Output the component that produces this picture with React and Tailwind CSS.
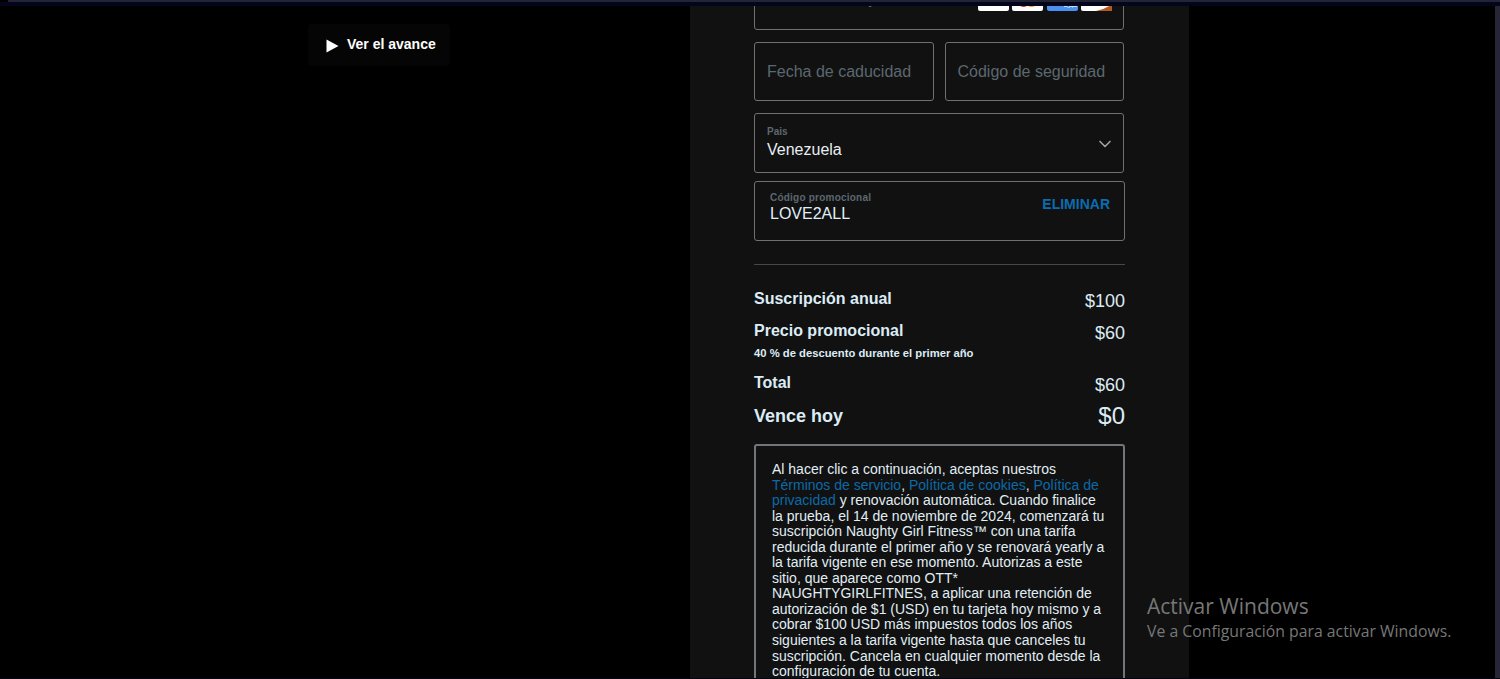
import React from 'react';
import { ChevronDown } from 'lucide-react';

const prices = [
  { label: 'Suscripción anual', value: '$100' },
  { label: 'Precio promocional', value: '$60', note: '40 % de descuento durante el primer año' },
  { label: 'Total', value: '$60' },
];

const fieldStyle = 'rounded-[3px] border border-[#707070]';

const CardLogos = () => (
  <svg width="134" height="20" viewBox="0 0 134 20" className="mt-px shrink-0">
    <rect width="31" height="20" rx="2" fill="#fff" />
    <rect x="34" width="31" height="20" rx="2" fill="#fff" />
    <circle cx="45.500" cy="10" r="6" fill="#eb2f2a" />
    <circle cx="53.500" cy="10" r="6" fill="#f79a2a" />
    <rect x="69" width="31" height="20" rx="2" fill="#4a90ee" />
    <path d="M86 15.500h3l1.500 1L92 15.500h7M91 13l4 3.500M95 13l-4 3.500" stroke="#c5ddfb" fill="none" />
    <rect x="103" width="31" height="20" rx="2" fill="#fff" />
    <path d="M134 13v7h-16q10-2 16-7z" fill="#b55a1c" />
  </svg>
);

const Link = ({ children }) => <a className="text-[#0b6aa8]">{children}</a>;

const PaymentForm = () => (
  <>
    <div className="flex h-6 w-[370px] flex-col justify-end overflow-hidden">
      <div className={`flex h-[59px] shrink-0 items-center justify-between pl-3 pr-[11px] ${fieldStyle}`}>
        <span className="pb-1 text-base leading-none text-[#5c6870]">Número de tarjeta</span>
        <CardLogos />
      </div>
    </div>

    <div className="mt-3 grid w-[370px] grid-cols-2 gap-[11px] text-base text-[#5c6870]">
      <div className={`flex h-[59px] items-center pl-3 ${fieldStyle}`}>Fecha de caducidad</div>
      <div className={`flex h-[59px] items-center pl-3 ${fieldStyle}`}>Código de seguridad</div>
    </div>

    <div className={`mt-3 flex h-[60px] w-[370px] items-center justify-between pt-0.5 pl-3 pr-2 ${fieldStyle}`}>
      <div>
        <div className="text-[10px] leading-3 font-bold text-[#5c6870]">Pais</div>
        <div className="text-base leading-6 text-[#e8eef2]">Venezuela</div>
      </div>
      <ChevronDown size={20} strokeWidth={2} className="text-[#a0a0a0]" />
    </div>

    <div className={`mt-2 flex h-[60px] justify-between pt-2.5 pl-[15px] pr-3.5 ${fieldStyle}`}>
      <div>
        <div className="text-[10px] leading-3 font-bold tracking-[0.22px] text-[#5c6870]">Código promocional</div>
        <div className="text-base leading-5 text-[#e0f0f8]">LOVE2ALL</div>
      </div>
      <button className="h-6 text-sm leading-6 font-bold text-[#0b6cb0]">ELIMINAR</button>
    </div>
  </>
);

const Summary = () => (
  <div className="mt-[23px] border-t border-[#484848] pt-6 text-[#dcecf5]">
    {prices.map((item) => (
      <div key={item.label} className={item.note ? 'h-[52px]' : 'h-8'}>
        <div className="flex justify-between">
          <span className="text-base leading-[19px] font-bold">{item.label}</span>
          <span className="text-lg leading-6">{item.value}</span>
        </div>
        {item.note && <div className="text-[11.25px] leading-4 font-bold">{item.note}</div>}
      </div>
    ))}
    <div className="-mt-px flex h-10 justify-between font-bold">
      <span className="text-lg leading-6">Vence hoy</span>
      <span className="text-2xl leading-6 font-normal">$0</span>
    </div>
  </div>
);

const Terms = () => (
  <div className="h-[260px] rounded-[3px] border-2 border-[#70777a] pt-4 pl-4 text-sm leading-[15.550px] whitespace-nowrap text-[#e0eef5]">
    Al hacer clic a continuación, aceptas nuestros<br />
    <Link>Términos de servicio</Link>, <Link>Política de cookies</Link>, <Link>Política de</Link><br />
    <Link>privacidad</Link> y renovación automática. Cuando finalice<br />
    la prueba, el 14 de noviembre de 2024, comenzará tu<br />
    suscripción Naughty Girl Fitness™ con una tarifa<br />
    reducida durante el primer año y se renovará yearly a<br />
    la tarifa vigente en ese momento. Autorizas a este<br />
    sitio, que aparece como OTT*<br />
    NAUGHTYGIRLFITNES, a aplicar una retención de<br />
    autorización de $1 (USD) en tu tarjeta hoy mismo y a<br />
    cobrar $100 USD más impuestos todos los años<br />
    siguientes a la tarifa vigente hasta que canceles tu<br />
    suscripción. Cancela en cualquier momento desde la<br />
    configuración de tu cuenta.
  </div>
);

const App = () => {
  return (
    <div className="relative flex h-[679px] w-[1500px] flex-col overflow-hidden bg-black font-['Liberation_Sans',Arial,sans-serif]">
      <div className="ml-2 h-0.5 shrink-0 bg-[#232536]" />
      <div className="h-1 shrink-0 bg-[#03051a]" />
      <div className="flex min-h-0 flex-1">
        <section className="w-[690px] shrink-0 pt-[18px] pl-[308px]">
          <button className="flex h-[42px] w-[142px] items-center rounded bg-[#050505] pl-[18px] text-sm font-bold text-white">
            <svg width="13" height="14" viewBox="0 0 13 14" className="mr-2 mt-0.5">
              <path d="M0.500 0.500L12.500 7L0.500 13.500Z" fill="currentColor" />
            </svg>
            <span className="pb-0.5">Ver el avance</span>
          </button>
        </section>
        <main className="w-[499px] shrink-0 overflow-hidden bg-[#111111] pr-16 pl-16">
          <PaymentForm />
          <Summary />
          <Terms />
        </main>
        <div className="ml-auto w-[5px] bg-[#262636]" />
      </div>

      {/* Windows activation watermark */}
      <div className="absolute top-[592px] left-[1147px] font-['Open_Sans','Noto_Sans',sans-serif] whitespace-nowrap text-[#777777]">
        <div className="text-[21px] leading-7">Activar Windows</div>
        <div className="text-[15.8px] leading-[22px]">Ve a Configuración para activar Windows.</div>
      </div>
      <div className="absolute inset-x-0 bottom-0 h-px bg-[#050510]" />
    </div>
  );
};

export default App;
